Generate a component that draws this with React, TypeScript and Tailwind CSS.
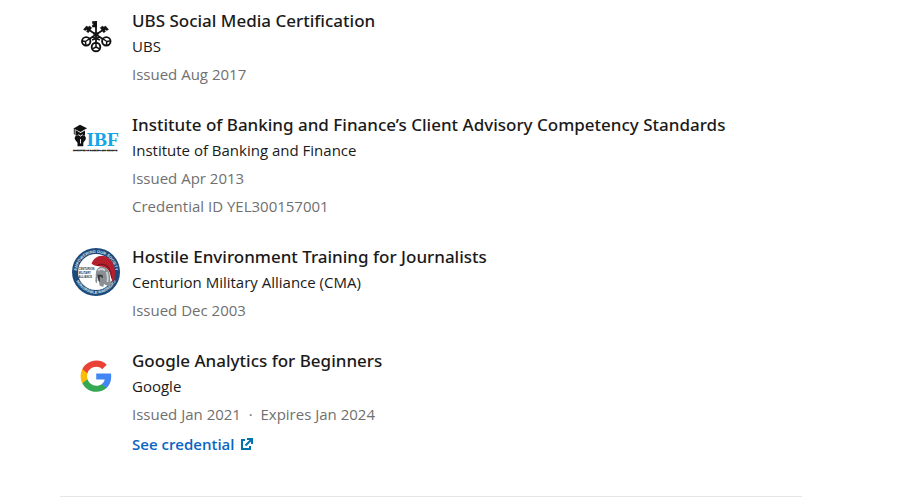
import React from 'react';

interface Certification {
  id: string;
  title: string;
  issuer: string;
  logo: React.ReactNode;
  meta: string[];
  credentialUrl?: string;
}

function UbsLogo() {
  return (
    <svg viewBox="0 0 48 48" className="w-12 h-12" fill="none" stroke="#111111" role="img" aria-label="UBS">
      <path d="M24 9v22M14 16l17.500 11.500M34 16L16.500 27.500" strokeWidth="1.800" />
      <path d="M20.500 9.500h4v5.500h-4v-2h1v-1.500h-1z" fill="#111111" strokeWidth="0.600" />
      <path d="M11.500 17.500l3-3.500 1.800 1.200 1-1.200 2.400 1.700-3.400 5-1.800-1.300 0.800-1.200-1-0.700-0.800 1.100z" fill="#111111" strokeWidth="0.500" />
      <path d="M36.500 17.500l-3-3.500-1.800 1.200-1-1.200-2.400 1.700 3.400 5 1.800-1.300-0.800-1.200 1-0.700 0.800 1.100z" fill="#111111" strokeWidth="0.500" />
      <circle cx="14.200" cy="29.300" r="4.200" strokeWidth="1.900" />
      <circle cx="34.300" cy="29.300" r="4.200" strokeWidth="1.900" />
      <circle cx="24" cy="35" r="4.300" strokeWidth="1.900" />
      <path d="M17 27l-3.500 2.500M13.500 29.500l-3-.6M13.500 29.500l.3 3.400M31.300 27l3.500 2.500M34.800 29.500l3-.6M34.800 29.500l-.3 3.400M24 31v4M24 35l-3 1.700M24 35l3 1.700" strokeWidth="1.500" />
      <path d="M21 21.500h6M20 25l8 3M28 25l-8 3" strokeWidth="1.800" />
    </svg>
  );
}

function IbfLogo() {
  return (
    <svg viewBox="0 0 48 48" className="w-12 h-12" role="img" aria-label="IBF">
      <path d="M1.500 12.500L8 8.800l7 3.400L8.500 16z" fill="#111111" />
      <path d="M3.500 14l5 3 4.500-2.500v5h-9.500z" fill="#111111" />
      <path d="M2.300 12.500v6" stroke="#111111" strokeWidth="0.900" />
      <path d="M4 19.500h8.500c1.500 1.500 1.800 3 .8 4.500l-2 2.700v3.500H5.500v-3.500L3.300 24c-1-1.500-.8-3 .7-4.500z" fill="#111111" />
      <path d="M6.500 18.500l2 1.700 2-1.700M8.500 23v4.500" stroke="#ffffff" strokeWidth="0.900" fill="none" />
      <text x="14.500" y="30" fontSize="19.500" fontWeight="700" fill="#12a5e8" fontFamily="Liberation Serif, serif">
        IBF
      </text>
      <text x="1" y="35" fontSize="2.300" fontWeight="700" fill="#111111" stroke="#111111" strokeWidth="0.300" fontFamily="Liberation Serif, serif">
        INSTITUTE OF BANKING AND FINANCE
      </text>
    </svg>
  );
}

function CenturionLogo() {
  return (
    <svg viewBox="0 0 48 48" className="w-12 h-12" role="img" aria-label="Centurion Military Alliance">
      <defs>
        <path id="ring-top" d="M4.800 24a19.200 19.200 0 0 1 38.400 0" />
        <path id="ring-bottom" d="M2.400 24a21.600 21.600 0 0 0 43.200 0" />
      </defs>
      <circle cx="24" cy="24" r="24" fill="#1d4a7a" />
      <circle cx="24" cy="24" r="18" fill="#ffffff" />
      <text fontSize="4" fontWeight="700" fill="#dde7f1" fontFamily="Liberation Sans, sans-serif" textAnchor="middle">
        <textPath href="#ring-top" startOffset="50%">EMPOWERING OUR SOCIETY</textPath>
      </text>
      <text fontSize="4" fontWeight="700" fill="#dde7f1" fontFamily="Liberation Sans, sans-serif" textAnchor="middle">
        <textPath href="#ring-bottom" startOffset="50%">HONORABLE WARRIORS</textPath>
      </text>
      <path
        d="M19.500 15.500C21.500 10 27 6.500 32.500 8c6.500 2 10.500 8.500 10.500 16 0 5-.6 9-1.500 12l-2.500-6.500c-.5-5.500-3-9-7.500-10.500-3.500-1-9-.5-12-3.500z"
        fill="#b5202c"
      />
      <path d="M25 17.500c5-2 9.500-1 12 3 1.500 2.500 2.300 5.500 2.800 9.500" fill="none" stroke="#7c1620" strokeWidth="1.200" />
      <path
        d="M24 24c.5-4 4-6 7.500-5 5 1.300 6.500 5.500 6.500 10 0 3.500.8 6.500 2.500 8.500-3 .8-6 .3-8.500-1.500l-.8 3-3.700-1.500-.5-5-1.500-3-.5 6-1.700-2z"
        fill="#8a8f93"
      />
      <path d="M26 22.500c2-2 5-2 7 0M34.500 24c1.500 3 1.500 6 1 10" fill="none" stroke="#d0d4d6" strokeWidth="1.800" />
      <path d="M25.500 26.500l5 .4.500 3.400-3.200-2v6l-1.400-1.500z" fill="#35393d" />
      <g fontSize="2.700" fontWeight="700" fill="#26384c" fontFamily="Liberation Sans, sans-serif">
        <text x="6.500" y="22">CENTURION</text>
        <text x="6.500" y="26">MILITARY</text>
        <text x="6.500" y="30">ALLIANCE</text>
      </g>
    </svg>
  );
}

function GoogleLogo() {
  return (
    <svg viewBox="0 0 48 48" className="w-12 h-12" role="img" aria-label="Google">
      <g transform="translate(7.200 7.200) scale(1.420)">
        <path fill="#4285F4" d="M22.560 12.250c0-.78-.07-1.530-.2-2.250H12v4.260h5.920c-.26 1.370-1.040 2.530-2.210 3.310v2.770h3.570c2.080-1.920 3.280-4.740 3.280-8.090z" />
        <path fill="#34A853" d="M12 23c2.970 0 5.460-.98 7.280-2.660l-3.570-2.770c-.98.66-2.230 1.060-3.710 1.060-2.860 0-5.290-1.930-6.160-4.530H2.180v2.840C3.990 20.530 7.700 23 12 23z" />
        <path fill="#FBBC05" d="M5.840 14.090c-.22-.66-.35-1.360-.35-2.090s.13-1.430.35-2.090V7.070H2.180C1.430 8.550 1 10.220 1 12s.43 3.450 1.180 4.930l3.660-2.840z" />
        <path fill="#EA4335" d="M12 5.380c1.620 0 3.060.56 4.210 1.640l3.150-3.150C17.450 2.090 14.970 1 12 1 7.700 1 3.990 3.470 2.180 7.070l3.660 2.840c.87-2.600 3.300-4.530 6.160-4.530z" />
      </g>
    </svg>
  );
}

function ExternalLinkIcon() {
  return (
    <svg viewBox="0 0 12 12" className="ml-1.5 inline-block w-3 h-3 align-baseline" fill="none" stroke="#0073b1" strokeWidth="2" aria-hidden="true">
      <path d="M4 2H1v9h8V8" />
      <path d="M4.500 7.500L10.500 1.500" />
      <path d="M6 1h5v5" />
    </svg>
  );
}

const certifications: Certification[] = [
  {
    id: 'ubs',
    title: 'UBS Social Media Certification',
    issuer: 'UBS',
    logo: <UbsLogo />,
    meta: ['Issued Aug 2017'],
  },
  {
    id: 'ibf',
    title: 'Institute of Banking and Finance’s Client Advisory Competency Standards',
    issuer: 'Institute of Banking and Finance',
    logo: <IbfLogo />,
    meta: ['Issued Apr 2013', 'Credential ID YEL300157001'],
  },
  {
    id: 'cma',
    title: 'Hostile Environment Training for Journalists',
    issuer: 'Centurion Military Alliance (CMA)',
    logo: <CenturionLogo />,
    meta: ['Issued Dec 2003'],
  },
  {
    id: 'google',
    title: 'Google Analytics for Beginners',
    issuer: 'Google',
    logo: <GoogleLogo />,
    meta: ['Issued Jan 2021 \u00a0·\u00a0 Expires Jan 2024'],
    credentialUrl: '#credential',
  },
];

export default function App() {
  return (
    <main className="bg-white pl-[60px] pr-[95px] font-['Open_Sans','Noto_Sans',sans-serif]">
      <ul className="flex flex-col gap-6 border-b border-[#e6e6e6] px-3 pt-2 pb-9">
        {certifications.map((cert) => (
          <li key={cert.id} className="flex gap-3">
            <div className="shrink-0 pt-1">{cert.logo}</div>
            <div className="min-w-0">
              <h3 className="font-['Noto_Sans','Open_Sans',sans-serif] text-[17px] leading-[26px] font-medium text-[#1a1a1a]">
                {cert.title}
              </h3>
              <p className="pb-0.5 text-[15px] leading-6 text-[#1a1a1a]">{cert.issuer}</p>
              {cert.meta.map((line) => (
                <p key={line} className="text-[15px] leading-7 text-[#707070]">{line}</p>
              ))}
              {cert.credentialUrl && (
                <a href={cert.credentialUrl} className="block text-[15px] leading-8 font-semibold text-[#0a66c2]">
                  See credential
                  <ExternalLinkIcon />
                </a>
              )}
            </div>
          </li>
        ))}
      </ul>
    </main>
  );
}
